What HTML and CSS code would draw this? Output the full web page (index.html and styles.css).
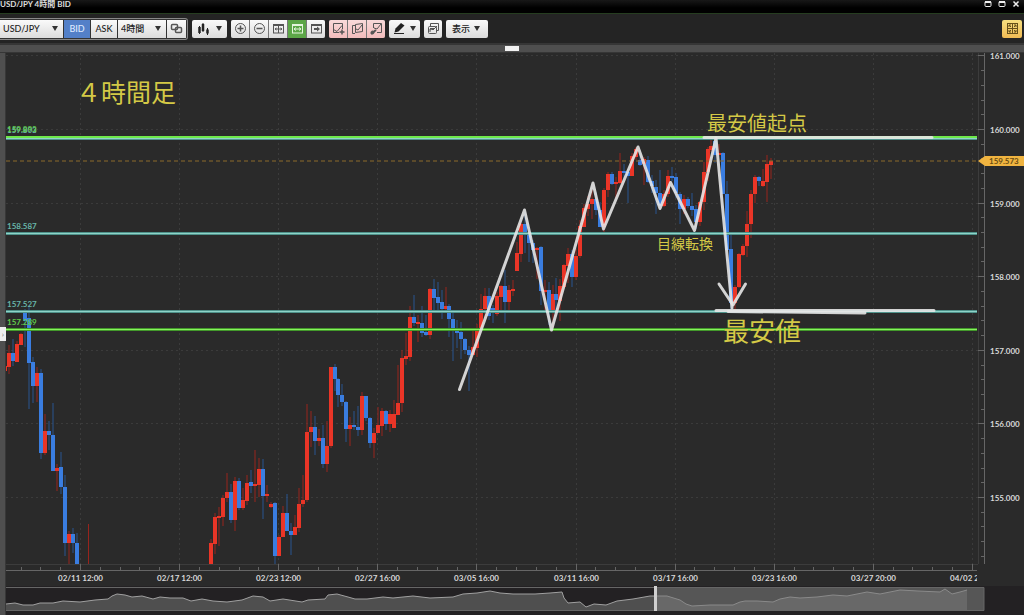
FILE: index.html
```html
<!DOCTYPE html>
<html lang="ja">
<head>
  <meta charset="UTF-8">
  <meta name="viewport" content="width=device-width, initial-scale=1.0">
  <title>USD/JPY 4時間 BID</title>
  <link rel="stylesheet" href="styles.css">
</head>
<body>
  <header class="titlebar">
    <h1>USD/JPY 4時間 BID</h1>
    <div class="window-buttons">
      <button type="button" aria-label="最小化"><svg width="8" height="8" viewBox="0 0 8 8"><rect x="1" y="1.5" width="6" height="5" rx="1"/><path d="M1 2h6" stroke-width="2"/></svg></button>
      <button type="button" aria-label="最大化"><svg width="8" height="8" viewBox="0 0 8 8"><rect x="1" y="1.5" width="6" height="5" rx="1"/><path d="M1 2h6" stroke-width="2"/></svg></button>
      <button type="button" aria-label="閉じる"><svg width="8" height="8" viewBox="0 0 8 8"><path d="M1.5 1.5l5 5M6.5 1.5l-5 5" stroke-width="1.5"/></svg></button>
    </div>
  </header>

  <div class="toolbar">
    <div class="group symbol-group">
      <label class="select symbol"><select aria-label="通貨ペア"><option>USD/JPY</option></select></label>
      <button type="button" class="btn side active">BID</button>
      <button type="button" class="btn side">ASK</button>
      <label class="select period"><select aria-label="足種"><option>4時間</option></select></label>
      <button type="button" class="btn link" aria-label="連動">
        <svg width="13" height="13" viewBox="0 0 13 13"><rect x="1.5" y="2.5" width="6" height="5" rx="1" stroke-width="1.5"/><rect x="5.5" y="5.5" width="6" height="5" rx="1" stroke-width="1.5"/></svg>
      </button>
    </div>

    <div class="group">
      <button type="button" class="btn drop" aria-label="チャート種類">
        <svg class="solid" width="13" height="13" viewBox="0 0 13 13"><path d="M2.5 4v8M6 1v9M10.5 6v7"/><path d="M2.500 5v6M6 2v7M10.500 7.500v4" stroke-width="2.500"/></svg>
      </button>
    </div>

    <div class="group">
      <button type="button" class="btn" aria-label="拡大"><svg width="13" height="13" viewBox="0 0 13 13"><circle cx="6.5" cy="6.5" r="5"/><path d="M3.5 6.5h6M6.5 3.5v6" stroke-width="1.5"/></svg></button>
      <button type="button" class="btn" aria-label="縮小"><svg width="13" height="13" viewBox="0 0 13 13"><circle cx="6.5" cy="6.5" r="5"/><path d="M3.5 6.5h6" stroke-width="1.5"/></svg></button>
      <button type="button" class="btn" aria-label="全体表示"><svg width="13" height="13" viewBox="0 0 13 13"><rect x="1.5" y="2.5" width="10" height="8.5"/><path d="M1 3h11" stroke-width="2"/><path d="M3 7h7M6.5 4v7M4.5 6L3 7l1.500 1M8.500 6L10 7 8.500 8"/></svg></button>
      <button type="button" class="btn fit" aria-label="幅に合わせる"><svg width="13" height="13" viewBox="0 0 13 13"><rect x="1.500" y="2.500" width="10" height="8.500"/><path d="M1 3h11" stroke-width="2"/><path d="M3 7h7M5 5.500L3 7l2 1.500M8 5.500L10 7 8 8.500"/></svg></button>
      <button type="button" class="btn" aria-label="最新へ"><svg width="13" height="13" viewBox="0 0 13 13"><rect x="1.500" y="2.500" width="10" height="8.500"/><path d="M1 3h11" stroke-width="2"/><path d="M4 7h4" stroke-width="2"/><path d="M7 4.500l3 2.500-3 2.500z" fill="currentColor" stroke="none"/></svg></button>
    </div>

    <div class="group pink">
      <button type="button" class="btn" aria-label="追加"><svg width="13" height="13" viewBox="0 0 13 13"><path d="M7 10.5H1.5v-9h9V7M1.5 7.500l3.500 2 5-6"/><path d="M10 7.500v5M7.500 10h5" stroke-width="1.500"/></svg></button>
      <button type="button" class="btn" aria-label="複製"><svg width="13" height="13" viewBox="0 0 13 13"><path d="M4 11.500H1.500v-8H5M4.500 2.500l7-1v8l-7 1zM5 7l2 1 4-5"/></svg></button>
      <button type="button" class="btn" aria-label="設定"><svg width="13" height="13" viewBox="0 0 13 13"><path d="M3.500 6V1.500h8v9H7M4 6l3 1 4-5"/><path d="M1 12l5-4" stroke-width="2"/><circle cx="2.500" cy="10.500" r="1.500" fill="currentColor"/></svg></button>
    </div>

    <div class="group">
      <button type="button" class="btn drop compact" aria-label="描画">
        <svg class="solid" width="13" height="13" viewBox="0 0 13 13"><path d="M1 11.500h10"/><path d="M1.500 10.500l1-4 5.500-5.500 3.500 2.500-6 6z" fill="currentColor" stroke="none"/></svg>
      </button>
    </div>

    <div class="group">
      <button type="button" class="btn" aria-label="チャート一覧"><svg width="13" height="13" viewBox="0 0 13 13"><rect x="1.500" y="4.500" width="8" height="7" rx="1"/><path d="M3.500 4V1.500h8v7H10M3 10V7M3 8l2-1 1 1 4-4M3 6.500h5"/></svg></button>
    </div>

    <div class="group">
      <button type="button" class="btn drop view">表示</button>
    </div>

    <button type="button" class="layout-btn" aria-label="レイアウト">
      <svg width="13" height="13" viewBox="0 0 13 13"><rect x="1.500" y="1.500" width="10" height="10"/><path d="M6.500 1v11M1 6.500h11M3 3l2 2M10 3L8 5M3 10l2-2M10 10L8 8M3 5V3h2M8 3h2v2M3 8v2h2M8 10h2V8"/></svg>
    </button>
  </div>

  <div class="splitter"><span class="grip"></span></div>

  <main class="workspace">
    <div class="rail"><button type="button" aria-label="パネルを開く">›</button></div>
    <div class="charts">
      <svg class="chart" viewBox="6 53 1018 533" role="img" aria-label="USD/JPY 4時間足チャート">
        <defs>
          <clipPath id="plot-clip"><rect x="6" y="53" width="971" height="533"/></clipPath>
        </defs>
        <g id="grid" class="grid"></g>
        <path class="frame" d="M978.500 53v511M6 564.500h972"/>
        <path class="axis" d="M984.500 53v511M6 570.500h971"/>
        <g id="ticks" class="axis"></g>
        <g id="candles"></g>

        <path class="current" d="M6 161h972"/>

        <g class="level teal">
          <path class="edge" d="M6 138.500h971M6 233.500h971M6 311.500h971"/>
          <path class="core" d="M6 138.500h971M6 233.500h971M6 311.500h971"/>
          <text x="7" y="133">159.803</text>
          <text x="7" y="229">158.587</text>
          <text x="7" y="307">157.527</text>
        </g>
        <g class="level green">
          <path class="edge" d="M6 329.500h971"/>
          <path class="core" d="M6 329.500h971"/>
          <path class="top" d="M6 137h971"/>
          <text x="7" y="132">159.893</text>
          <text x="7" y="325">157.289</text>
        </g>

        <g class="drawing">
          <path d="M459.500 389.500L524.500 210l27 120L593 183l10.500 46L638 147l22 61.500 10.500-26 24 48L716 138l16 170"/>
          <path d="M719 284l14 21 12.500-21"/>
          <path class="bar" d="M704 137.500h228M716 310.500h218"/>
          <path d="M728 311.500l137 1.500"/>
        </g>
        <g class="note">
          <text class="note-title" x="76" y="102">４時間足</text>
          <text class="note-start" x="707" y="131">最安値起点</text>
          <text class="note-turn" x="657" y="249">目線転換</text>
          <text class="note-low" x="723" y="341">最安値</text>
        </g>

        <g id="price-labels" class="labels"></g>
        <g id="time-labels" class="labels time" clip-path="url(#plot-clip)"></g>
        <path class="tag" d="M978 161l7-5h39v10h-39z"/>
        <text class="tag-text" x="989" y="164">159.573</text>
      </svg>

      <svg class="overview" viewBox="6 586 1018 29" role="img" aria-label="全期間">
        <rect class="window" x="656" y="587" width="328" height="23"/>
        <g id="overview"></g>
        <path class="overview-frame" d="M6 587.500h978v23H6"/>
        <rect class="handle" x="654" y="586" width="3" height="25"/>
      </svg>
    </div>
  </main>

  <script src="chart.js"></script>
</body>
</html>
```
FILE: styles.css
```css
* {
  box-sizing: border-box;
}

body {
  margin: 0;
  background: #232123;
  color: #ddd;
  font-family: Lato, 'Noto Sans CJK JP', sans-serif;
  font-size: 9px;
}

button,
select {
  font: inherit;
  color: inherit;
  border: 0;
  padding: 0;
  margin: 0;
}

svg {
  display: block;
}

.titlebar {
  display: flex;
  align-items: flex-start;
  justify-content: space-between;
  height: 14px;
  padding-right: 4px;
  overflow: hidden;
  background: linear-gradient(#181818, #000 60%);
  border-bottom: 1px solid #263d20;
}

.titlebar h1 {
  margin: 0;
  font-size: 8px;
  line-height: 8px;
  font-weight: 700;
}

.window-buttons {
  display: flex;
  gap: 6px;
}

.window-buttons button {
  background: none;
  color: #eee;
}

.window-buttons svg,
.btn svg,
.layout-btn svg {
  fill: none;
  stroke: currentColor;
}

.toolbar {
  display: flex;
  align-items: center;
  gap: 4px;
  height: 29px;
  padding-right: 2px;
  background: #242424;
}

.group {
  display: flex;
  gap: 1px;
  height: 18px;
  border-radius: 2px;
  overflow: hidden;
  background: #777;
}

.symbol-group {
  height: 22px;
  padding: 1px 1px 1px 0;
  border: 1px solid #888;
  border-left: 0;
  border-radius: 0 3px 3px 0;
  background: #333;
}

.btn,
.select {
  display: flex;
  align-items: center;
  justify-content: center;
  min-width: 18px;
  background: linear-gradient(#fafafa, #dcdcdc);
  color: #555;
}

.btn .solid {
  color: #222;
}

.select {
  position: relative;
}

.select select {
  width: 100%;
  height: 100%;
  padding: 0 12px 0 3px;
  appearance: none;
  background: none;
  color: #222;
  font-weight: 500;
}

.symbol {
  width: 63px;
}

.period {
  width: 48px;
}

.link {
  width: 19px;
}

.select::after,
.drop::after {
  content: '';
  border: 3px solid transparent;
  border-top: 5px solid #333;
  border-bottom: 0;
}

.select::after {
  position: absolute;
  right: 5px;
  pointer-events: none;
}

.side {
  width: 26px;
  color: #222;
  font-weight: 500;
}

.side.active {
  background: #5380c8;
  color: #dfeaff;
}

.drop {
  gap: 6px;
  padding: 0 5px;
}

.drop.compact {
  gap: 4px;
  padding: 0 4px;
}

.drop.view {
  padding: 0 8px 0 6px;
  gap: 4px;
  color: #222;
  font-weight: 500;
}

.fit {
  background: #5ca647;
  color: #e4f5dd;
}

.pink .btn {
  background: linear-gradient(#f8dada, #f2bcbc);
}

.layout-btn {
  display: flex;
  align-items: center;
  justify-content: center;
  width: 20px;
  height: 18px;
  margin-left: auto;
  border-radius: 2px;
  background: linear-gradient(#f6df80, #f0bb55);
  color: #66501a;
}

.splitter {
  display: flex;
  align-items: center;
  justify-content: center;
  height: 10px;
  background: #4f4f4f;
  border-top: 2px solid #363636;
  border-bottom: 1px solid #363636;
}

.grip {
  width: 14px;
  height: 5px;
  background: #f2f2f2;
}

.workspace {
  display: grid;
  grid-template-columns: 6px 1fr;
}

.rail {
  display: flex;
  align-items: center;
  background: #4f4f4f;
  border-right: 1px solid #383838;
}

.rail button {
  width: 6px;
  height: 14px;
  flex: none;
  background: #eee;
  color: #777;
  font-size: 8px;
  line-height: 14px;
}

.chart,
.overview {
  width: 100%;
}

.chart {
  background: #2a2a2a;
}

.grid {
  stroke: #3b3b3b;
  stroke-dasharray: 2 3;
}

.frame {
  fill: none;
  stroke: #3c3c3c;
}

.axis {
  fill: none;
  stroke: #666;
}

.up {
  fill: #ea3527;
}

.down {
  fill: #3a7de0;
}

.up.wick {
  fill: #97241d;
}

.down.wick {
  fill: #28558f;
}

.current {
  stroke: #8c6a2a;
  stroke-width: 1;
  stroke-dasharray: 4 3;
}

.level text {
  font-size: 8px;
  font-weight: 700;
}

.level .edge {
  stroke-width: 3;
}

.level .core {
  stroke-width: 1;
}

.teal text {
  fill: #68b5a8;
}

.teal .edge {
  stroke: #4f938b;
}

.teal .core {
  stroke: #8ed3c8;
}

.green text {
  fill: #60c94a;
}

.green .edge {
  stroke: #43992b;
}

.green .core {
  stroke: #86f35d;
}

.green .top {
  stroke: #6ee84a;
  stroke-width: 2;
}

.drawing {
  fill: none;
  stroke: #e6e6e6;
  stroke-opacity: .9;
  stroke-width: 3;
  stroke-linecap: round;
  stroke-linejoin: round;
}

.note {
  fill: #d4c946;
  font-family: 'Noto Sans CJK JP', sans-serif;
}

.note-title {
  font-size: 25px;
}

.note-start {
  font-size: 20px;
}

.note-turn {
  font-size: 14px;
}

.note-low {
  font-size: 26px;
}

.labels {
  fill: #d8d8d8;
  font-size: 8px;
  font-weight: 700;
}

.time {
  text-anchor: middle;
}

.tag {
  fill: #f0b440;
}

.tag-text {
  fill: #6a4d12;
  font-size: 8px;
  font-weight: 700;
}

.window {
  fill: #565656;
}

.area {
  fill: #4f4f4f;
}

.area.selected {
  fill: #686868;
}

.line {
  fill: none;
  stroke: #a0a0a0;
}

.line.selected {
  stroke: #8a8a8a;
}

.overview-frame {
  fill: none;
  stroke: #666;
}

.handle {
  fill: #d0d0d0;
}
```
FILE: chart.js
```js
const SVG = 'http://www.w3.org/2000/svg';

// x, high, body top, body bottom, low, direction (1 = up, 0 = down)
const candles = [
  [9, 345, 353, 367, 374, 1], [13, 339, 353, 361, 366, 0], [17, 341, 344, 362, 362, 1],
  [21, 333, 334, 345, 345, 1], [25, 309, 310, 321, 347, 0], [29, 306, 318, 363, 409, 0],
  [33, 357, 362, 386, 403, 0], [37, 367, 373, 386, 402, 1], [41, 369, 373, 453, 459, 0],
  [45, 414, 431, 453, 455, 1], [49, 421, 431, 435, 450, 0], [53, 403, 435, 471, 471, 0],
  [57, 464, 468, 471, 491, 1], [61, 452, 467, 487, 494, 0], [65, 475, 487, 543, 556, 0],
  [69, 531, 534, 543, 564, 1], [73, 528, 534, 543, 553, 0], [77, 533, 543, 564, 564, 0],
  [211, 539, 543, 564, 564, 1], [215, 513, 517, 544, 554, 1], [219, 507, 516, 518, 546, 1],
  [223, 495, 498, 517, 526, 1], [227, 473, 492, 498, 502, 1], [231, 484, 492, 520, 523, 0],
  [235, 477, 481, 520, 531, 1], [239, 478, 481, 508, 510, 0], [243, 488, 500, 508, 510, 1],
  [247, 475, 483, 501, 505, 1], [251, 470, 482, 486, 493, 0], [255, 450, 484, 486, 502, 1],
  [259, 458, 469, 485, 497, 1], [263, 459, 469, 496, 519, 0], [267, 485, 494, 496, 502, 1],
  [271, 502, 504, 507, 508, 1], [275, 502, 503, 556, 564, 0], [279, 535, 537, 556, 556, 1],
  [283, 506, 513, 537, 537, 1], [287, 494, 513, 531, 531, 0], [291, 523, 531, 535, 555, 0],
  [295, 515, 527, 535, 535, 1], [299, 488, 504, 528, 532, 1], [303, 475, 500, 504, 507, 1],
  [307, 404, 432, 500, 502, 1], [311, 411, 427, 432, 447, 1], [315, 416, 427, 441, 455, 0],
  [319, 429, 438, 441, 446, 1], [323, 425, 438, 464, 468, 0], [327, 421, 446, 464, 472, 1],
  [331, 367, 367, 446, 448, 1], [335, 364, 367, 379, 391, 0], [338, 378, 379, 395, 407, 0],
  [342, 384, 395, 402, 406, 0], [346, 401, 402, 429, 442, 0], [350, 417, 425, 429, 446, 1],
  [354, 411, 425, 427, 430, 0], [358, 406, 427, 430, 436, 0], [362, 392, 396, 430, 435, 1],
  [366, 396, 396, 418, 421, 0], [370, 417, 418, 443, 448, 0], [374, 428, 433, 443, 458, 1],
  [378, 407, 425, 433, 433, 1], [382, 408, 411, 426, 436, 1], [386, 410, 411, 424, 430, 0],
  [390, 410, 414, 424, 432, 1], [394, 400, 414, 428, 428, 1], [398, 365, 403, 415, 415, 1],
  [402, 350, 358, 403, 412, 1], [406, 333, 356, 359, 365, 1], [410, 306, 317, 357, 361, 1],
  [414, 295, 317, 323, 326, 0], [418, 315, 322, 324, 342, 1], [422, 306, 323, 333, 337, 0],
  [426, 315, 332, 335, 336, 0], [430, 288, 289, 335, 339, 1], [434, 279, 289, 298, 313, 0],
  [438, 282, 297, 303, 312, 0], [442, 290, 302, 309, 319, 0], [446, 287, 306, 309, 313, 1],
  [449, 304, 306, 319, 337, 0], [453, 313, 319, 330, 361, 0], [457, 320, 330, 333, 348, 0],
  [461, 322, 332, 339, 359, 0], [465, 338, 339, 350, 354, 0], [469, 346, 350, 355, 391, 0],
  [473, 331, 347, 355, 355, 1], [477, 324, 329, 348, 357, 1], [481, 294, 309, 330, 330, 1],
  [485, 288, 296, 309, 318, 1], [489, 288, 296, 316, 320, 0], [493, 305, 308, 313, 323, 0],
  [497, 292, 296, 314, 316, 1], [501, 285, 286, 297, 310, 1], [505, 270, 286, 302, 323, 0],
  [509, 285, 290, 302, 310, 1], [513, 280, 289, 291, 296, 1], [517, 242, 253, 271, 271, 1],
  [521, 222, 224, 254, 262, 1], [525, 212, 224, 233, 253, 0], [529, 230, 232, 243, 262, 0],
  [533, 240, 243, 250, 263, 0], [537, 247, 248, 250, 279, 1], [541, 246, 247, 291, 305, 0],
  [545, 280, 290, 292, 310, 1], [549, 282, 290, 310, 325, 0], [553, 285, 294, 311, 328, 1],
  [556, 278, 294, 300, 310, 0], [560, 279, 286, 301, 321, 1], [564, 264, 265, 287, 289, 1],
  [568, 248, 254, 266, 283, 1], [572, 250, 254, 277, 287, 0], [576, 249, 256, 277, 280, 1],
  [580, 220, 226, 256, 258, 1], [584, 204, 208, 227, 227, 1], [588, 196, 204, 209, 216, 1],
  [592, 190, 199, 204, 219, 1], [596, 192, 199, 210, 215, 0], [600, 202, 210, 227, 227, 0],
  [604, 188, 190, 227, 232, 1], [608, 172, 174, 190, 197, 1], [612, 172, 174, 184, 185, 0],
  [616, 177, 182, 184, 198, 1], [620, 153, 171, 183, 184, 1], [624, 164, 171, 173, 178, 0],
  [628, 170, 172, 176, 203, 0], [632, 153, 156, 176, 176, 1], [636, 147, 149, 157, 160, 1],
  [640, 155, 160, 165, 166, 0], [644, 157, 159, 164, 185, 1], [648, 156, 160, 182, 183, 0],
  [652, 175, 181, 186, 193, 0], [656, 180, 187, 193, 214, 0], [660, 170, 193, 206, 209, 0],
  [664, 190, 194, 206, 207, 1], [668, 170, 176, 194, 197, 1], [672, 167, 176, 178, 181, 0],
  [676, 173, 177, 193, 198, 0], [680, 192, 194, 209, 224, 0], [684, 195, 199, 209, 214, 1],
  [688, 197, 199, 206, 208, 0], [692, 193, 206, 210, 216, 0], [696, 205, 209, 222, 229, 0],
  [700, 201, 202, 222, 226, 1], [704, 162, 172, 202, 210, 1], [708, 147, 149, 172, 181, 1],
  [711, 139, 146, 150, 152, 1], [715, 141, 141, 155, 163, 0], [719, 144, 153, 155, 155, 1],
  [723, 152, 153, 194, 194, 0], [727, 181, 194, 250, 250, 0], [731, 235, 249, 303, 310, 0],
  [735, 285, 287, 303, 310, 1], [739, 253, 254, 287, 288, 1], [743, 244, 246, 255, 256, 1],
  [747, 211, 224, 246, 257, 1], [751, 190, 194, 224, 238, 1], [755, 175, 177, 194, 203, 1],
  [759, 176, 177, 181, 186, 0], [763, 169, 181, 186, 187, 1], [767, 155, 164, 182, 202, 1],
  [771, 158, 161, 165, 179, 1]
];

const times = [
  '02/11 12:00', '02/17 12:00', '02/23 12:00', '02/27 16:00', '03/05 16:00',
  '03/11 16:00', '03/17 16:00', '03/23 16:00', '03/27 20:00', '04/02 20:00'
];

// Overview line before and inside the visible window
const past = [
  [6, 604], [15, 603], [23, 605], [33, 605], [40, 603], [53, 603], [63, 601], [80, 602],
  [95, 600], [108, 599], [112, 596], [117, 594], [125, 595], [132, 597], [142, 596],
  [153, 599], [160, 597], [170, 598], [183, 598], [191, 601], [202, 599], [213, 601],
  [227, 602], [242, 600], [253, 596], [263, 597], [270, 601], [283, 599], [302, 602],
  [308, 600], [325, 599], [328, 595], [337, 594], [348, 597], [355, 599], [367, 599],
  [383, 597], [393, 598], [413, 596], [430, 598], [453, 597], [463, 594], [477, 593],
  [490, 591], [500, 593], [513, 594], [535, 594], [550, 593], [562, 592], [564, 598],
  [568, 603], [580, 602], [586, 607], [594, 604], [606, 605], [617, 601], [633, 599],
  [650, 596], [656, 596]
];
const visible = [
  [656, 596], [667, 596], [680, 600], [686, 604], [692, 606], [710, 605], [733, 605],
  [740, 602], [745, 601], [757, 601], [773, 602], [780, 599], [790, 597], [800, 598],
  [817, 597], [833, 595], [847, 596], [867, 592], [880, 594], [900, 590], [918, 591],
  [940, 592], [945, 589], [952, 594], [960, 592], [967, 590]
];

function add(parent, name, attrs, text) {
  const el = document.createElementNS(SVG, name);
  for (const key in attrs) el.setAttribute(key, attrs[key]);
  if (text) el.textContent = text;
  parent.appendChild(el);
}

const priceY = price => Math.round(129 + (160 - price) * 73.6) + 0.5;
const timeX = i => Math.round(80 + i * 99.1) + 0.5;

const grid = document.getElementById('grid');
const ticks = document.getElementById('ticks');
const priceLabels = document.getElementById('price-labels');
const timeLabels = document.getElementById('time-labels');
const candleLayer = document.getElementById('candles');
const overview = document.getElementById('overview');

// Price axis
for (let price = 161; price >= 155; price--) {
  const y = priceY(price);
  add(grid, 'path', { d: `M6 ${y}h972` });
  add(ticks, 'path', { d: `M978 ${y}h6` });
  add(priceLabels, 'text', { x: 990, y: y + 3 }, price.toFixed(3));
  for (let i = 1; i < 5; i++) {
    add(ticks, 'path', { d: `M981 ${priceY(price - i / 5)}h3` });
  }
}

// Time axis
times.forEach((time, i) => {
  const x = timeX(i);
  add(grid, 'path', { d: `M${x} 53v511` });
  add(ticks, 'path', { d: `M${x} 564v6` });
  add(timeLabels, 'text', { x: x, y: 581 }, time);
  for (let j = 1; j < 5; j++) {
    const minor = timeX(i - j / 5);
    if (minor > 6) add(ticks, 'path', { d: `M${minor} 567v3` });
  }
});

// Candles
for (const [x, high, top, bottom, low, up] of candles) {
  const side = up ? 'up' : 'down';
  add(candleLayer, 'rect', { class: side + ' wick', x: x - 0.5, y: high, width: 1, height: low - high });
  add(candleLayer, 'rect', { class: side, x: x - 2, y: top, width: 4, height: bottom - top });
}
add(candleLayer, 'rect', { class: 'up wick', x: 88, y: 524, width: 1, height: 40 });
add(candleLayer, 'rect', { class: 'up', x: 6, y: 366, width: 1, height: 5 });

// Overview
function addArea(points, side) {
  const line = points.join(' ');
  const left = points[0][0];
  const right = points[points.length - 1][0];
  add(overview, 'polygon', { class: 'area ' + side, points: `${left},610 ${line} ${right},610` });
  add(overview, 'polyline', { class: 'line ' + side, points: line });
}
addArea(past, 'past');
addArea(visible, 'selected');
```
